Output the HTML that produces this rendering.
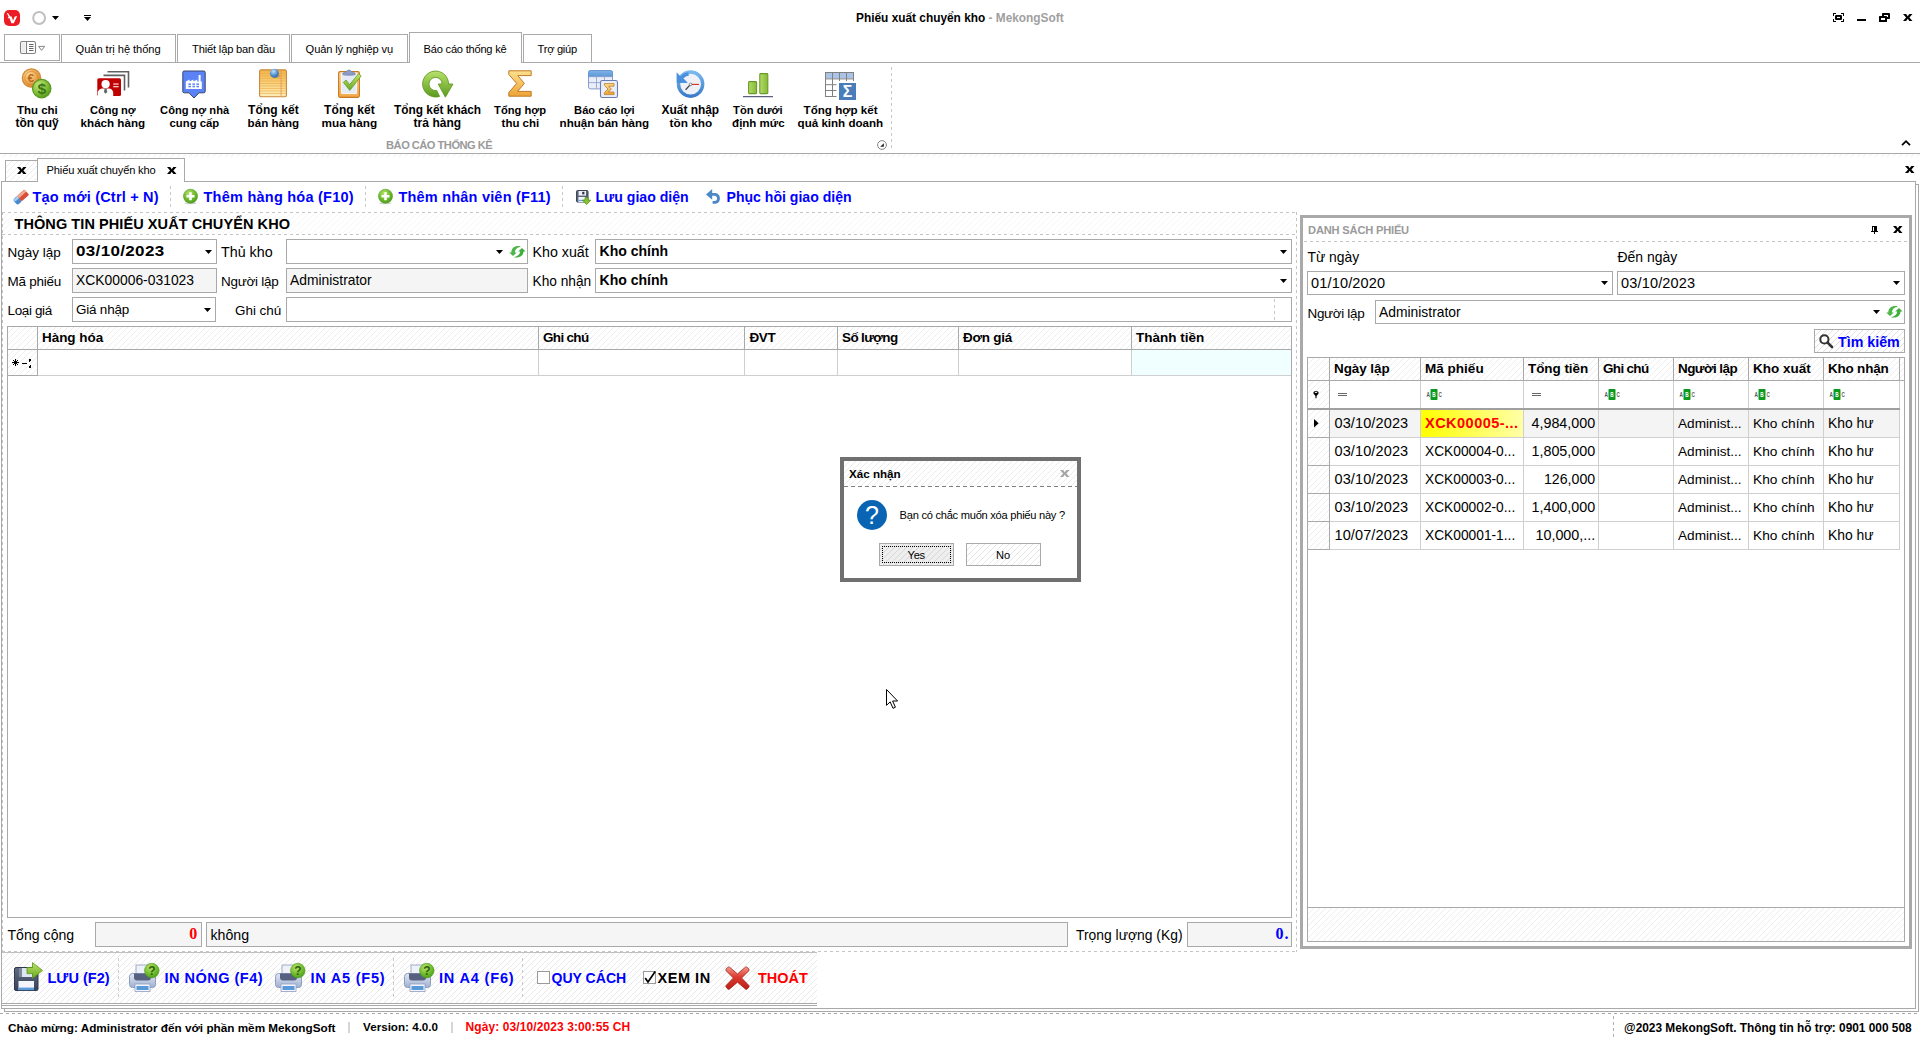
<!DOCTYPE html>
<html lang="vi"><head><meta charset="utf-8"><title>Phiếu xuất chuyển kho - MekongSoft</title>
<style>
html,body{margin:0;padding:0}
body{width:1920px;height:1040px;position:relative;overflow:hidden;background:#fff;font-family:"Liberation Sans", sans-serif}
.a{position:absolute;box-sizing:border-box}
.t{position:absolute;white-space:nowrap;display:block}
svg{position:absolute;overflow:visible}
</style></head>
<body>
<svg style="left:4px;top:10px" width="16" height="16" viewBox="0 0 16 16"><rect width="16" height="16" rx="5" fill="#ec1c24"/><path d="M2.6 2.8L4.4 3.4 6.2 6.6 7.4 6.2 9 10.6 10.8 6.4 13.2 6 9.8 13.2H7.4L5.4 8 3.8 8.4 4.6 6.6Z" fill="#fff"/></svg>
<svg style="left:32px;top:11px" width="15" height="15" viewBox="0 0 15 15"><circle cx="7.1" cy="7" r="5.9" fill="#fff" stroke="#bfbfbf" stroke-width="2"/></svg>
<svg style="left:52px;top:16px" width="7" height="4" viewBox="0 0 7 4"><path d="M0 0H7L3.5 4Z" fill="#000"/></svg>
<svg style="left:84px;top:15px" width="7" height="7" viewBox="0 0 7 7"><rect x="0" y="0" width="7" height="1" fill="#000" shape-rendering="crispEdges"/><path d="M0 2H7L3.5 6Z" fill="#000"/></svg>
<span id="t1" class="t" style="left:856.08px;top:8.00px;font-size:11.86px;line-height:20px;color:#000;font-weight:700;">Phiếu xuất chuyển kho<span style="color:#a0a0a0"> - MekongSoft</span></span>
<svg style="left:1833px;top:13px" width="11" height="9" viewBox="0 0 11 9"><g shape-rendering="crispEdges" fill="#000"><rect x="0" y="0" width="3" height="1"/><rect x="0" y="0" width="1" height="3"/><rect x="8" y="0" width="3" height="1"/><rect x="10" y="0" width="1" height="3"/><rect x="0" y="8" width="3" height="1"/><rect x="0" y="6" width="1" height="3"/><rect x="8" y="8" width="3" height="1"/><rect x="10" y="6" width="1" height="3"/></g><rect x="2" y="2" width="7" height="5" rx="1.2" fill="#000"/><rect x="4" y="3.9" width="3" height="1.2" fill="#fff"/></svg>
<svg style="left:1857px;top:19px" width="9" height="2" viewBox="0 0 9 2"><rect width="9" height="2" fill="#000"/></svg>
<svg style="left:1879px;top:13px" width="11" height="9" viewBox="0 0 11 9"><rect x="3" y="0" width="8" height="6" rx=".8" fill="#000"/><rect x="5" y="2" width="4" height="2" fill="#fff"/><rect x="0" y="3" width="8" height="6" rx=".5" fill="#000"/><rect x="2" y="5" width="4" height="2" fill="#fff"/></svg>
<svg style="left:1903px;top:14px" width="9.5" height="7" viewBox="0 0 9.5 7"><path d="M0 0H3.18L4.75 2.17 6.32 0H9.5L6.41 3.5 9.5 7H6.32L4.75 4.83 3.18 7H0L3.09 3.5Z" fill="#000"/></svg>
<div class="a" style="left:0px;top:62px;width:1920px;height:1px;background:#a9a9a9"></div>
<div class="a" style="left:4px;top:34px;width:56px;height:27px;border:1px solid #a9a9a9;background:linear-gradient(#fff,#fff);"></div>
<div class="a" style="left:61px;top:34px;width:115px;height:29px;border:1px solid #a9a9a9;background:linear-gradient(#fff,#fff);"></div>
<div class="a" style="left:177px;top:34px;width:113px;height:29px;border:1px solid #a9a9a9;background:linear-gradient(#fff,#fff);"></div>
<div class="a" style="left:291px;top:34px;width:117px;height:29px;border:1px solid #a9a9a9;background:linear-gradient(#fff,#fff);"></div>
<div class="a" style="left:409px;top:32px;width:113px;height:31px;border:1px solid #a9a9a9;background:linear-gradient(#fff,#fff);border-bottom:none;"></div>
<div class="a" style="left:523px;top:34px;width:69px;height:29px;border:1px solid #a9a9a9;background:linear-gradient(#fff,#fff);"></div>
<svg style="left:20px;top:41px" width="26" height="14" viewBox="0 0 26 14"><rect x="0.5" y="0.5" width="15" height="12" rx="1.8" fill="#fff" stroke="#808080" stroke-width="1.1"/><rect x="1.6" y="1.6" width="3.6" height="9.8" fill="#ececec"/><path d="M6.5 .5V12.5" stroke="#808080" stroke-width="1.1"/><path d="M9 3.5H13.5M9 5.5H13.5M9 7.5H13.5M9 9.5H13.5" stroke="#555" stroke-width=".9"/><path d="M18.6 5.4H24.6L21.6 9.4Z" fill="#fff" stroke="#777" stroke-width=".9"/></svg>
<span id="t2" class="t" style="left:75.61px;top:39.00px;font-size:11.11px;line-height:20px;color:#000;letter-spacing:-0.051px;">Quản trị hệ thống</span>
<span id="t3" class="t" style="left:192.11px;top:39.00px;font-size:11.11px;line-height:20px;color:#000;letter-spacing:-0.176px;">Thiết lập ban đầu</span>
<span id="t4" class="t" style="left:305.61px;top:39.00px;font-size:11.11px;line-height:20px;color:#000;letter-spacing:-0.125px;">Quản lý nghiệp vụ</span>
<span id="t5" class="t" style="left:423.61px;top:39.00px;font-size:11.11px;line-height:20px;color:#000;letter-spacing:-0.228px;">Báo cáo thống kê</span>
<span id="t6" class="t" style="left:537.61px;top:39.00px;font-size:11.11px;line-height:20px;color:#000;letter-spacing:-0.272px;">Trợ giúp</span>
<svg style="left:21px;top:68px" width="32" height="32" viewBox="0 0 32 32"><defs><radialGradient id="g1" cx="0.35" cy="0.3" r="0.8"><stop offset="0" stop-color="#fbd893"/><stop offset="0.6" stop-color="#eaa248"/><stop offset="1" stop-color="#cf7f2e"/></radialGradient><radialGradient id="g2" cx="0.35" cy="0.3" r="0.8"><stop offset="0" stop-color="#c2e67a"/><stop offset="0.6" stop-color="#7fbc32"/><stop offset="1" stop-color="#4f8f1a"/></radialGradient></defs><circle cx="10.5" cy="10" r="9.2" fill="url(#g1)" stroke="#d28a3c" stroke-width="1.2"/><circle cx="10.5" cy="10" r="6.6" fill="none" stroke="#c8782a" stroke-width="1" opacity=".55"/><text x="9.6" y="14" text-anchor="middle" font-family="Liberation Sans,sans-serif" font-size="11.5" font-weight="700" fill="#b8681e">€</text><circle cx="20.7" cy="20.6" r="9.2" fill="url(#g2)" stroke="#5a9822" stroke-width="1.2"/><text x="20.7" y="26.2" text-anchor="middle" font-family="Liberation Sans,sans-serif" font-size="15.5" font-weight="700" fill="#38761a">$</text></svg>
<svg style="left:97px;top:67.2px" width="33" height="30" viewBox="0 0 33 30"><path d="M10.5 4.8H31.5V20.5" fill="none" stroke="#606060" stroke-width="1.6"/><path d="M6.5 8.4H27.5V23.6" fill="none" stroke="#606060" stroke-width="1.6"/><rect x="0.3" y="11.2" width="23.7" height="17.8" rx="1.6" fill="#c00000"/><circle cx="8.6" cy="17.2" r="4.1" fill="#fff"/><path d="M0.8 29V26C0.8 23 3.6 21.6 5.8 21.6H11.4C13.6 21.6 16.2 23 16.2 26V29Z" fill="#fff"/><path d="M7.6 21.6H9.6L10.3 25 8.6 26.8 6.9 25Z" fill="#666"/><rect x="16.2" y="16.4" width="5.4" height="1.3" fill="#f4c8c8"/><rect x="16.2" y="19" width="5.4" height="1.3" fill="#f4c8c8"/></svg>
<svg style="left:182px;top:70px" width="24" height="29" viewBox="0 0 24 29"><path d="M2.2 1H21.8A1.4 1.4 0 0 1 23.2 2.4V21.4A1.4 1.4 0 0 1 21.8 22.8H17L12 28 7 22.8H2.2A1.4 1.4 0 0 1 .8 21.4V2.4A1.4 1.4 0 0 1 2.2 1Z" fill="#5a83f8" stroke="#3a4468" stroke-width="1"/><path d="M3.8 19V11.6L7.6 9.4V11.6L11.4 9.4V11.6L15.2 9.4V11.6H16.6V5H18.6V11.6H19.8V19Z" fill="#fff"/><g fill="#5a83f8"><rect x="6.4" y="13.4" width="2.6" height="1.5"/><rect x="10.4" y="13.4" width="2.6" height="1.5"/><rect x="14.4" y="13.4" width="2.6" height="1.5"/><rect x="6.4" y="15.8" width="2.6" height="1.5"/><rect x="10.4" y="15.8" width="2.6" height="1.5"/><rect x="14.4" y="15.8" width="2.6" height="1.5"/></g></svg>
<svg style="left:259px;top:69px" width="28" height="29" viewBox="0 0 28 29"><defs><linearGradient id="g3" x1="0" y1="0" x2="0" y2="1"><stop offset="0" stop-color="#f4b445"/><stop offset="1" stop-color="#fdeeb8"/></linearGradient><radialGradient id="g4" cx="0.4" cy="0.3" r="0.8"><stop offset="0" stop-color="#bfe0f8"/><stop offset="0.6" stop-color="#4a8acb"/><stop offset="1" stop-color="#2c5f9e"/></radialGradient></defs><rect x="0.6" y="0.9" width="26.8" height="26.8" rx="1.5" fill="url(#g3)" stroke="#c8883c" stroke-width="1.1"/><rect x="1.5" y="4.0" width="25" height="1" fill="#e8a840" opacity=".55"/><rect x="1.5" y="6.5" width="25" height="1" fill="#e8a840" opacity=".55"/><rect x="1.5" y="9.0" width="25" height="1" fill="#e8a840" opacity=".55"/><rect x="1.5" y="11.5" width="25" height="1" fill="#e8a840" opacity=".55"/><rect x="1.5" y="14.0" width="25" height="1" fill="#e8a840" opacity=".55"/><rect x="1.5" y="16.5" width="25" height="1" fill="#e8a840" opacity=".55"/><rect x="1.5" y="19.0" width="25" height="1" fill="#e8a840" opacity=".55"/><rect x="1.5" y="21.5" width="25" height="1" fill="#e8a840" opacity=".55"/><rect x="1.5" y="24.0" width="25" height="1" fill="#e8a840" opacity=".55"/><rect x="21.6" y="1.5" width="1" height="25.5" fill="#e08a50" opacity=".7"/><ellipse cx="17.5" cy="7" rx="3.6" ry="2" fill="#7a5a20" opacity=".25"/><circle cx="15.4" cy="4.2" r="4.5" fill="url(#g4)"/></svg>
<svg style="left:338px;top:69px" width="24" height="29" viewBox="0 0 24 29"><defs><linearGradient id="g5" x1="0" y1="0" x2="0" y2="1"><stop offset="0" stop-color="#fbd79a"/><stop offset="1" stop-color="#f0a848"/></linearGradient><linearGradient id="g6" x1="0" y1="0" x2="0" y2="1"><stop offset="0" stop-color="#c4e86c"/><stop offset="1" stop-color="#6aa820"/></linearGradient></defs><rect x="0.6" y="2.6" width="20.8" height="25.8" rx="1.6" fill="url(#g5)" stroke="#c8781e" stroke-width="1.1"/><rect x="3.6" y="4" width="14.8" height="20.4" fill="#e4eaf6" stroke="#fff" stroke-width=".8"/><path d="M4.6 5.2C4.6 3 8 3.6 9 2 9.8.6 12.2.6 13 2 14 3.6 17.4 3 17.4 5.2 17.4 6.6 4.6 6.6 4.6 5.2Z" fill="#8c9cc6" stroke="#6478a8" stroke-width=".6"/><path d="M5.4 13.4L8 11 11.6 15.6 20.8 4.6 23.2 7 11.8 21.4Z" fill="url(#g6)" stroke="#5a9018" stroke-width=".7"/></svg>
<svg style="left:421.6px;top:70px" width="32" height="28" viewBox="0 0 32 28"><defs><linearGradient id="g7" x1="0" y1="0" x2="0" y2="1"><stop offset="0" stop-color="#b8e26c"/><stop offset="1" stop-color="#5c9a1e"/></linearGradient></defs><path d="M20.2 14A6.6 6.6 0 1 0 14.75 20.5L17.6 26.4A13 13 0 1 1 26.6 14H31L23.4 27.2 16.2 14Z" fill="url(#g7)" stroke="#5a9418" stroke-width=".8" stroke-linejoin="round"/></svg>
<svg style="left:508px;top:70px" width="24" height="27" viewBox="0 0 24 27"><defs><linearGradient id="g8" x1="0" y1="0" x2="0" y2="1"><stop offset="0" stop-color="#fde08e"/><stop offset="1" stop-color="#eda436"/></linearGradient></defs><g transform="scale(1.0)"><path d="M0.8 0.8H23.2V5.6H9.8L16.4 13.4 9.6 21.4H23.2V26.2H0.8V22.6L8.6 13.4 0.8 4.4Z" fill="url(#g8)" stroke="#c07a28" stroke-width="1" stroke-linejoin="round"/></g></svg>
<svg style="left:588px;top:70px" width="31" height="29" viewBox="0 0 31 29"><defs><linearGradient id="g9" x1="0" y1="0" x2="0" y2="1"><stop offset="0" stop-color="#7db4e8"/><stop offset="1" stop-color="#5a98d8"/></linearGradient><linearGradient id="g10" x1="0" y1="0" x2="0" y2="1"><stop offset="0" stop-color="#fde08e"/><stop offset="1" stop-color="#eda436"/></linearGradient></defs><rect x="0.5" y="0.5" width="24" height="18.4" rx="2" fill="#e9eef9" stroke="#8a9ccc"/><path d="M.5 6.6V2.5A2 2 0 0 1 2.5.5H22.5A2 2 0 0 1 24.5 2.5V6.6Z" fill="url(#g9)" stroke="#5a8ccc" stroke-width=".6"/><path d="M8.5 .5V18.8M16.5 .5V18.8M.5 6.6H24.5M.5 12.6H24.5" stroke="#8a9ccc" stroke-width="1" fill="none" opacity=".8"/><rect x="12.5" y="10.5" width="17" height="17" rx="1.8" fill="#e9eefb" stroke="#6a7cb4" stroke-width="1.1"/><path d="M16.4 13.6H26V16.2H20.6L23.4 19 20.4 22H26V24.6H16.4V22.6L20 19 16.4 15.4Z" fill="url(#g10)" stroke="#c07a28" stroke-width=".8" stroke-linejoin="round"/></svg>
<svg style="left:676px;top:70px" width="29" height="29" viewBox="0 0 29 29"><defs><linearGradient id="g11" x1="0" y1="0" x2="0" y2="1"><stop offset="0" stop-color="#7ab8f0"/><stop offset="1" stop-color="#3a7cc8"/></linearGradient></defs><circle cx="14.6" cy="14.1" r="12.1" fill="#eef2f8" stroke="url(#g11)" stroke-width="3.4"/><path d="M.6 2.2L4.6 6.4C6.6 4 9 2.6 12 2.2L13 5.4C10.6 5.8 9 6.8 7.4 8.6L11.6 12.8H.6Z" fill="#4a90dc"/><path d="M.6 12.8H11.6L7.6 9Z" fill="#4a90dc"/><path d="M14.6 14.4H23" stroke="#d82a20" stroke-width="1.1"/><path d="M14.6 14.4L9.6 19.8" stroke="#444" stroke-width="1.3"/><circle cx="14.6" cy="14.4" r="1.3" fill="#fff" stroke="#555" stroke-width=".7"/></svg>
<svg style="left:743px;top:73px" width="30" height="25" viewBox="0 0 30 25"><defs><linearGradient id="g12" x1="0" y1="0" x2="1" y2="0"><stop offset="0" stop-color="#b4dc66"/><stop offset="1" stop-color="#86b83a"/></linearGradient></defs><rect x="5.6" y="8.6" width="8" height="12" rx=".8" fill="url(#g12)" stroke="#6a9a28" stroke-width="1.1"/><rect x="16.8" y="0.6" width="8" height="20" rx=".8" fill="url(#g12)" stroke="#6a9a28" stroke-width="1.1"/><rect x="0" y="23.2" width="30" height="1" fill="#333b60"/></svg>
<svg style="left:825px;top:72px" width="32" height="29" viewBox="0 0 32 29"><rect x="0.5" y="0.5" width="28" height="24" fill="#fff" stroke="#808080"/><rect x="1" y="1" width="27" height="5.4" fill="#a9c4e8"/><path d="M.5 6.9H28.5M.5 12.7H28.5M.5 18.5H28.5M7.5 .5V24.5M14.5 .5V24.5M21.5 .5V24.5" stroke="#808080" stroke-width="1" fill="none"/><rect x="11.5" y="9" width="20" height="19" fill="#fff"/><rect x="14" y="11" width="17" height="17" fill="#4a7ebb"/><text x="22.5" y="25.4" text-anchor="middle" font-family="Liberation Sans,sans-serif" font-size="16" font-weight="700" fill="#fff">Σ</text></svg>
<span id="t7" class="t" style="left:17.10px;top:100.00px;font-size:11.41px;line-height:20px;color:#000;font-weight:700;">Thu chi</span>
<span id="t8" class="t" style="left:15.58px;top:113.00px;font-size:11.94px;line-height:20px;color:#000;font-weight:700;">tồn quỹ</span>
<span id="t9" class="t" style="left:90.11px;top:100.00px;font-size:11.11px;line-height:20px;color:#000;font-weight:700;letter-spacing:-0.101px;">Công nợ</span>
<span id="t10" class="t" style="left:80.59px;top:113.00px;font-size:11.62px;line-height:20px;color:#000;font-weight:700;">khách hàng</span>
<span id="t11" class="t" style="left:160.11px;top:100.00px;font-size:11.12px;line-height:20px;color:#000;font-weight:700;">Công nợ nhà</span>
<span id="t12" class="t" style="left:169.60px;top:113.00px;font-size:11.29px;line-height:20px;color:#000;font-weight:700;">cung cấp</span>
<span id="t13" class="t" style="left:248.08px;top:100.00px;font-size:11.99px;line-height:20px;color:#000;font-weight:700;letter-spacing:0.090px;">Tổng kết</span>
<span id="t14" class="t" style="left:247.59px;top:113.00px;font-size:11.61px;line-height:20px;color:#000;font-weight:700;">bán hàng</span>
<span id="t15" class="t" style="left:324.08px;top:100.00px;font-size:11.99px;line-height:20px;color:#000;font-weight:700;letter-spacing:0.090px;">Tổng kết</span>
<span id="t16" class="t" style="left:321.59px;top:113.00px;font-size:11.77px;line-height:20px;color:#000;font-weight:700;">mua hàng</span>
<span id="t17" class="t" style="left:394.08px;top:100.00px;font-size:11.87px;line-height:20px;color:#000;font-weight:700;">Tổng kết khách</span>
<span id="t18" class="t" style="left:413.58px;top:113.00px;font-size:11.99px;line-height:20px;color:#000;font-weight:700;letter-spacing:0.041px;">trả hàng</span>
<span id="t19" class="t" style="left:494.11px;top:100.00px;font-size:11.18px;line-height:20px;color:#000;font-weight:700;">Tổng hợp</span>
<span id="t20" class="t" style="left:501.60px;top:113.00px;font-size:11.46px;line-height:20px;color:#000;font-weight:700;">thu chi</span>
<span id="t21" class="t" style="left:574.11px;top:100.00px;font-size:11.14px;line-height:20px;color:#000;font-weight:700;">Báo cáo lợi</span>
<span id="t22" class="t" style="left:559.59px;top:113.00px;font-size:11.60px;line-height:20px;color:#000;font-weight:700;">nhuận bán hàng</span>
<span id="t23" class="t" style="left:661.58px;top:100.00px;font-size:11.92px;line-height:20px;color:#000;font-weight:700;">Xuất nhập</span>
<span id="t24" class="t" style="left:669.59px;top:113.00px;font-size:11.80px;line-height:20px;color:#000;font-weight:700;">tồn kho</span>
<span id="t25" class="t" style="left:733.11px;top:100.00px;font-size:11.18px;line-height:20px;color:#000;font-weight:700;">Tồn dưới</span>
<span id="t26" class="t" style="left:732.10px;top:113.00px;font-size:11.53px;line-height:20px;color:#000;font-weight:700;">định mức</span>
<span id="t27" class="t" style="left:803.59px;top:100.00px;font-size:11.62px;line-height:20px;color:#000;font-weight:700;">Tổng hợp kết</span>
<span id="t28" class="t" style="left:797.59px;top:113.00px;font-size:11.58px;line-height:20px;color:#000;font-weight:700;">quả kinh doanh</span>
<span id="t29" class="t" style="left:386.11px;top:135.00px;font-size:11.11px;line-height:20px;color:#9a9a9a;font-weight:700;letter-spacing:-0.509px;">BÁO CÁO THỐNG KÊ</span>
<svg style="left:877px;top:140px" width="10" height="10" viewBox="0 0 10 10"><circle cx="5" cy="5" r="4.4" fill="#fff" stroke="#777" stroke-width=".9"/><path d="M6.8 3.2V6.8H3.2Z" fill="#222"/></svg>
<div class="a" style="left:891px;top:67px;width:1px;height:84px;background:repeating-linear-gradient(180deg,#c8c8c8 0,#c8c8c8 3px,rgba(0,0,0,0) 3px,rgba(0,0,0,0) 6px)"></div>
<svg style="left:1901px;top:140px" width="10" height="6" viewBox="0 0 10 6"><path d="M1 5.2L5 1.2 9 5.2" fill="none" stroke="#000" stroke-width="1.8"/></svg>
<div class="a" style="left:0px;top:153px;width:1920px;height:1px;background:#a9a9a9"></div>
<div class="a" style="left:0px;top:154px;width:1920px;height:3px;background:repeating-linear-gradient(135deg,rgba(0,0,0,0) 0,rgba(0,0,0,0) 3.54px,#eeeeee 3.54px,#eeeeee 4.243px);"></div>
<div class="a" style="left:5px;top:160px;width:33px;height:22px;border:1px solid #a9a9a9;background:repeating-linear-gradient(135deg,rgba(0,0,0,0) 0,rgba(0,0,0,0) 3.54px,#ececec 3.54px,#ececec 4.243px),linear-gradient(#fff,#fff);"></div>
<div class="a" style="left:37px;top:158px;width:148px;height:24px;border:1px solid #a9a9a9;background:linear-gradient(#fff,#fff);border-bottom:none;"></div>
<svg style="left:16.5px;top:167px" width="9.5" height="7" viewBox="0 0 9.5 7"><path d="M0 0H3.18L4.75 2.17 6.32 0H9.5L6.41 3.5 9.5 7H6.32L4.75 4.83 3.18 7H0L3.09 3.5Z" fill="#000"/></svg>
<svg style="left:167.3px;top:167px" width="9.5" height="7" viewBox="0 0 9.5 7"><path d="M0 0H3.18L4.75 2.17 6.32 0H9.5L6.41 3.5 9.5 7H6.32L4.75 4.83 3.18 7H0L3.09 3.5Z" fill="#000"/></svg>
<svg style="left:1905px;top:166px" width="9.5" height="7" viewBox="0 0 9.5 7"><path d="M0 0H3.18L4.75 2.17 6.32 0H9.5L6.41 3.5 9.5 7H6.32L4.75 4.83 3.18 7H0L3.09 3.5Z" fill="#000"/></svg>
<span id="t30" class="t" style="left:46.61px;top:160.00px;font-size:11.11px;line-height:20px;color:#000;letter-spacing:-0.169px;">Phiếu xuất chuyển kho</span>
<div class="a" style="left:1px;top:181px;width:36px;height:1px;background:#a9a9a9"></div>
<div class="a" style="left:185px;top:181px;width:1731px;height:1px;background:#a9a9a9"></div>
<div class="a" style="left:1px;top:181px;width:1px;height:828px;background:#a9a9a9"></div>
<div class="a" style="left:1915px;top:181px;width:1px;height:828px;background:#a9a9a9"></div>
<div class="a" style="left:1918px;top:184px;width:1px;height:828px;background:#a9a9a9"></div>
<div class="a" style="left:1916px;top:184px;width:3px;height:1px;background:#a9a9a9"></div>
<div class="a" style="left:1px;top:1008px;width:1915px;height:1px;background:#a9a9a9"></div>
<div class="a" style="left:4px;top:1011px;width:1915px;height:1px;background:#a9a9a9"></div>
<div class="a" style="left:4px;top:1008px;width:1px;height:4px;background:#a9a9a9"></div>
<svg style="left:13px;top:190px" width="16" height="14" viewBox="0 0 16 14"><g transform="translate(0.6 0.6) scale(0.93) rotate(-42 8 7)"><rect x="-0.6" y="3.2" width="7" height="7.8" rx="2.2" fill="#4a8acc"/><rect x="0" y="3.6" width="6.4" height="2.8" rx="1.2" fill="#a4ccf0"/><rect x="5.6" y="3.2" width="10.6" height="7.8" rx="1.2" fill="#d64f3a"/><rect x="5.6" y="3.6" width="10.6" height="2.8" fill="#f4ab96"/></g></svg>
<span id="t31" class="t" style="left:32.49px;top:187.00px;font-size:14.53px;line-height:20px;color:#0000ff;font-weight:700;letter-spacing:0.194px;">Tạo mới (Ctrl + N)</span>
<div class="a" style="left:170px;top:186px;width:1px;height:23px;background:repeating-linear-gradient(180deg,#c8c8c8 0,#c8c8c8 3px,rgba(0,0,0,0) 3px,rgba(0,0,0,0) 6px)"></div>
<svg style="left:183px;top:189px" width="15" height="16" viewBox="0 0 15 16"><defs><radialGradient id="g13" cx="0.4" cy="0.3" r="0.75"><stop offset="0" stop-color="#b6e36a"/><stop offset="0.6" stop-color="#6cb82a"/><stop offset="1" stop-color="#4c9a1c"/></radialGradient></defs><ellipse cx="7.5" cy="14.3" rx="6" ry="1" fill="#000" opacity=".18"/><circle cx="7.5" cy="7.2" r="7" fill="url(#g13)" stroke="#4f9a20" stroke-width=".6"/><path d="M7.5 3.2V11.2M3.5 7.2H11.5" stroke="#fff" stroke-width="2.6" fill="none"/></svg>
<span id="t32" class="t" style="left:203.49px;top:187.00px;font-size:14.53px;line-height:20px;color:#0000ff;font-weight:700;letter-spacing:0.230px;">Thêm hàng hóa (F10)</span>
<div class="a" style="left:365px;top:186px;width:1px;height:23px;background:repeating-linear-gradient(180deg,#c8c8c8 0,#c8c8c8 3px,rgba(0,0,0,0) 3px,rgba(0,0,0,0) 6px)"></div>
<svg style="left:378px;top:189px" width="15" height="16" viewBox="0 0 15 16"><defs><radialGradient id="g14" cx="0.4" cy="0.3" r="0.75"><stop offset="0" stop-color="#b6e36a"/><stop offset="0.6" stop-color="#6cb82a"/><stop offset="1" stop-color="#4c9a1c"/></radialGradient></defs><ellipse cx="7.5" cy="14.3" rx="6" ry="1" fill="#000" opacity=".18"/><circle cx="7.5" cy="7.2" r="7" fill="url(#g14)" stroke="#4f9a20" stroke-width=".6"/><path d="M7.5 3.2V11.2M3.5 7.2H11.5" stroke="#fff" stroke-width="2.6" fill="none"/></svg>
<span id="t33" class="t" style="left:398.49px;top:187.00px;font-size:14.53px;line-height:20px;color:#0000ff;font-weight:700;letter-spacing:0.194px;">Thêm nhân viên (F11)</span>
<div class="a" style="left:562px;top:186px;width:1px;height:23px;background:repeating-linear-gradient(180deg,#c8c8c8 0,#c8c8c8 3px,rgba(0,0,0,0) 3px,rgba(0,0,0,0) 6px)"></div>
<svg style="left:576px;top:190px" width="16" height="15" viewBox="0 0 16 15"><rect x="0.5" y="0.5" width="11.5" height="11.5" rx="1" fill="#5a6478" stroke="#3e4658"/><rect x="2.6" y="1" width="7.4" height="4.6" fill="#eef1f6"/><rect x="6.2" y="1.8" width="2.2" height="2.6" fill="#2e3546"/><rect x="2.4" y="7" width="7.8" height="5" fill="#f4f6fa"/><rect x="2.4" y="9.8" width="7.8" height="1.3" fill="#6aa6e0"/><path d="M9 7.6H12.2V10.2H14.9L10.6 14.6 6.4 10.2H9Z" fill="#86c232" stroke="#4e8a14" stroke-width=".7"/></svg>
<span id="t34" class="t" style="left:595.51px;top:187.00px;font-size:14.10px;line-height:20px;color:#0000ff;font-weight:700;">Lưu giao diện</span>
<svg style="left:706px;top:189px" width="16" height="15" viewBox="0 0 16 15"><path d="M4 5.4H9.4A4.5 4.2 0 0 1 9.4 13.4H6.6" fill="none" stroke="#4c88c8" stroke-width="2.8"/><path d="M0 5.4L6.2 0V10.8Z" fill="#4c88c8"/></svg>
<span id="t35" class="t" style="left:726.51px;top:187.00px;font-size:14.09px;line-height:20px;color:#0000ff;font-weight:700;">Phục hồi giao diện</span>
<div class="a" style="left:3px;top:213px;width:1293px;height:21px;background:repeating-linear-gradient(135deg,rgba(0,0,0,0) 0,rgba(0,0,0,0) 3.54px,#f6f6f6 3.54px,#f6f6f6 4.243px);"></div>
<div class="a" style="left:2px;top:212px;width:1295px;height:1px;background:repeating-linear-gradient(90deg,#c4c4c4 0,#c4c4c4 3px,rgba(0,0,0,0) 3px,rgba(0,0,0,0) 6px);background-position:0px 0"></div>
<div class="a" style="left:2px;top:234px;width:1295px;height:1px;background:repeating-linear-gradient(90deg,#c4c4c4 0,#c4c4c4 3px,rgba(0,0,0,0) 3px,rgba(0,0,0,0) 6px);background-position:0px 0"></div>
<div class="a" style="left:2px;top:212px;width:1px;height:740px;background:repeating-linear-gradient(180deg,#c4c4c4 0,#c4c4c4 3px,rgba(0,0,0,0) 3px,rgba(0,0,0,0) 6px)"></div>
<div class="a" style="left:1296px;top:212px;width:1px;height:740px;background:repeating-linear-gradient(180deg,#c4c4c4 0,#c4c4c4 3px,rgba(0,0,0,0) 3px,rgba(0,0,0,0) 6px)"></div>
<div class="a" style="left:2px;top:951px;width:1295px;height:1px;background:repeating-linear-gradient(90deg,#c4c4c4 0,#c4c4c4 3px,rgba(0,0,0,0) 3px,rgba(0,0,0,0) 6px);background-position:0px 0"></div>
<span id="t36" class="t" style="left:14.49px;top:214.00px;font-size:14.53px;line-height:20px;color:#000;font-weight:700;letter-spacing:0.070px;">THÔNG TIN PHIẾU XUẤT CHUYỂN KHO</span>
<div class="a" style="left:72px;top:239px;width:145px;height:25px;border:1px solid #a9a9a9;background:linear-gradient(#fff,#fff);"></div>
<div class="a" style="left:286px;top:239px;width:242px;height:25px;border:1px solid #a9a9a9;background:linear-gradient(#fff,#fff);"></div>
<div class="a" style="left:595px;top:239px;width:697px;height:25px;border:1px solid #a9a9a9;background:linear-gradient(#fff,#fff);"></div>
<div class="a" style="left:72px;top:268px;width:145px;height:25px;border:1px solid #a9a9a9;background:linear-gradient(#f5f5f5,#f5f5f5);"></div>
<div class="a" style="left:286px;top:268px;width:242px;height:25px;border:1px solid #a9a9a9;background:linear-gradient(#f5f5f5,#f5f5f5);"></div>
<div class="a" style="left:595px;top:268px;width:697px;height:25px;border:1px solid #a9a9a9;background:linear-gradient(#fff,#fff);"></div>
<div class="a" style="left:72px;top:297px;width:144px;height:25px;border:1px solid #a9a9a9;background:linear-gradient(#fff,#fff);"></div>
<div class="a" style="left:286px;top:297px;width:1006px;height:25px;border:1px solid #a9a9a9;background:linear-gradient(#fff,#fff);"></div>
<div class="a" style="left:1274px;top:299px;width:1px;height:21px;background:repeating-linear-gradient(180deg,#c8c8c8 0,#c8c8c8 3px,rgba(0,0,0,0) 3px,rgba(0,0,0,0) 6px)"></div>
<span id="t37" class="t" style="left:7.53px;top:243.00px;font-size:13.47px;line-height:20px;color:#000;">Ngày lập</span>
<span id="t38" class="t" style="left:7.53px;top:272.00px;font-size:13.46px;line-height:20px;color:#000;letter-spacing:-0.246px;">Mã phiếu</span>
<span id="t39" class="t" style="left:7.53px;top:301.00px;font-size:13.46px;line-height:20px;color:#000;letter-spacing:-0.357px;">Loại giá</span>
<span id="t40" class="t" style="left:221.00px;top:242.00px;font-size:14.31px;line-height:20px;color:#000;">Thủ kho</span>
<span id="t41" class="t" style="left:221.03px;top:272.00px;font-size:13.46px;line-height:20px;color:#000;letter-spacing:-0.259px;">Người lập</span>
<span id="t42" class="t" style="left:235.03px;top:301.00px;font-size:13.46px;line-height:20px;color:#000;letter-spacing:-0.037px;">Ghi chú</span>
<span id="t43" class="t" style="left:532.50px;top:242.00px;font-size:14.24px;line-height:20px;color:#000;">Kho xuất</span>
<span id="t44" class="t" style="left:532.52px;top:272.00px;font-size:13.71px;line-height:20px;color:#000;">Kho nhận</span>
<span id="t45" class="t" style="left:75.99px;top:241.00px;font-size:14.53px;line-height:20px;color:#000;font-weight:700;letter-spacing:0.298px;transform:scaleX(1.17);transform-origin:0 0;">03/10/2023</span>
<span id="t46" class="t" style="left:76.01px;top:270.00px;font-size:13.89px;line-height:20px;color:#000;">XCK00006-031023</span>
<span id="t47" class="t" style="left:76.03px;top:300.00px;font-size:13.46px;line-height:20px;color:#000;letter-spacing:-0.209px;">Giá nhập</span>
<span id="t48" class="t" style="left:290.01px;top:270.00px;font-size:13.87px;line-height:20px;color:#000;">Administrator</span>
<span id="t49" class="t" style="left:599.51px;top:241.00px;font-size:14.06px;line-height:20px;color:#000;font-weight:700;">Kho chính</span>
<span id="t50" class="t" style="left:599.51px;top:270.00px;font-size:14.06px;line-height:20px;color:#000;font-weight:700;">Kho chính</span>
<svg style="left:205px;top:250px" width="7" height="4" viewBox="0 0 7 4"><path d="M0 0H7L3.5 4Z" fill="#000"/></svg>
<svg style="left:204px;top:308px" width="7" height="4" viewBox="0 0 7 4"><path d="M0 0H7L3.5 4Z" fill="#000"/></svg>
<svg style="left:496px;top:250px" width="7" height="4" viewBox="0 0 7 4"><path d="M0 0H7L3.5 4Z" fill="#000"/></svg>
<svg style="left:1280px;top:250px" width="7" height="4" viewBox="0 0 7 4"><path d="M0 0H7L3.5 4Z" fill="#000"/></svg>
<svg style="left:1280px;top:279px" width="7" height="4" viewBox="0 0 7 4"><path d="M0 0H7L3.5 4Z" fill="#000"/></svg>
<svg style="left:508.5px;top:244.5px" width="17" height="14" viewBox="0 0 17 14"><path d="M11.4 1.1C6 0.1 2.2 3 2.3 7.4L0.2 7.4 4 10.9 7.8 7.5 5.8 7.5C5.9 4.6 8 2.5 11.4 1.7Z" fill="#4cb648"/><path d="M5.4 12.4C10.6 13.4 14.4 10.6 14.5 6.4L16.6 6.4 13 3.1 9.2 6.5 11.2 6.5C11 9.2 9 11.2 5.4 11.9Z" fill="#3fae3c"/></svg>
<div class="a" style="left:7px;top:326px;width:1285px;height:592px;border:1px solid #a9a9a9;background:linear-gradient(#fff,#fff);"></div>
<div class="a" style="left:8px;top:327px;width:1283px;height:22px;background:repeating-linear-gradient(135deg,rgba(0,0,0,0) 0,rgba(0,0,0,0) 3.54px,#eeeeee 3.54px,#eeeeee 4.243px);"></div>
<div class="a" style="left:8px;top:349px;width:1283px;height:1px;background:#a9a9a9"></div>
<div class="a" style="left:8px;top:350px;width:29px;height:26px;background:repeating-linear-gradient(135deg,rgba(0,0,0,0) 0,rgba(0,0,0,0) 3.54px,#eeeeee 3.54px,#eeeeee 4.243px);"></div>
<div class="a" style="left:1132px;top:350px;width:159px;height:25px;background:linear-gradient(#f0ffff,#f0ffff);"></div>
<div class="a" style="left:37px;top:327px;width:1px;height:23px;background:#a9a9a9"></div>
<div class="a" style="left:37px;top:350px;width:1px;height:26px;background:#a9a9a9"></div>
<div class="a" style="left:538px;top:327px;width:1px;height:23px;background:#a9a9a9"></div>
<div class="a" style="left:538px;top:350px;width:1px;height:26px;background:#cfcfcf"></div>
<div class="a" style="left:744px;top:327px;width:1px;height:23px;background:#a9a9a9"></div>
<div class="a" style="left:744px;top:350px;width:1px;height:26px;background:#cfcfcf"></div>
<div class="a" style="left:837px;top:327px;width:1px;height:23px;background:#a9a9a9"></div>
<div class="a" style="left:837px;top:350px;width:1px;height:26px;background:#cfcfcf"></div>
<div class="a" style="left:958px;top:327px;width:1px;height:23px;background:#a9a9a9"></div>
<div class="a" style="left:958px;top:350px;width:1px;height:26px;background:#cfcfcf"></div>
<div class="a" style="left:1131px;top:327px;width:1px;height:23px;background:#a9a9a9"></div>
<div class="a" style="left:1131px;top:350px;width:1px;height:26px;background:#cfcfcf"></div>
<div class="a" style="left:8px;top:375px;width:1283px;height:1px;background:#cfcfcf"></div>
<div class="a" style="left:8px;top:375px;width:30px;height:1px;background:#a9a9a9"></div>
<span id="t51" class="t" style="left:42.03px;top:328.00px;font-size:13.46px;line-height:20px;color:#000;font-weight:700;letter-spacing:-0.022px;">Hàng hóa</span>
<span id="t52" class="t" style="left:543.03px;top:328.00px;font-size:13.46px;line-height:20px;color:#000;font-weight:700;letter-spacing:-0.658px;">Ghi chú</span>
<span id="t53" class="t" style="left:749.53px;top:328.00px;font-size:13.46px;line-height:20px;color:#000;font-weight:700;letter-spacing:-0.383px;">ĐVT</span>
<span id="t54" class="t" style="left:842.03px;top:328.00px;font-size:13.46px;line-height:20px;color:#000;font-weight:700;letter-spacing:-0.612px;">Số lượng</span>
<span id="t55" class="t" style="left:963.03px;top:328.00px;font-size:13.46px;line-height:20px;color:#000;font-weight:700;letter-spacing:-0.255px;">Đơn giá</span>
<span id="t56" class="t" style="left:1136.03px;top:328.00px;font-size:13.49px;line-height:20px;color:#000;font-weight:700;">Thành tiền</span>
<svg style="left:12px;top:359px" width="20" height="9" viewBox="0 0 20 9"><g shape-rendering="crispEdges" fill="#000"><rect x="3" y="0" width="1" height="1"/><rect x="1" y="1" width="1" height="1"/><rect x="3" y="1" width="1" height="1"/><rect x="5" y="1" width="1" height="1"/><rect x="2" y="2" width="1" height="1"/><rect x="3" y="2" width="1" height="1"/><rect x="4" y="2" width="1" height="1"/><rect x="0" y="3" width="1" height="1"/><rect x="1" y="3" width="1" height="1"/><rect x="2" y="3" width="1" height="1"/><rect x="3" y="3" width="1" height="1"/><rect x="4" y="3" width="1" height="1"/><rect x="5" y="3" width="1" height="1"/><rect x="6" y="3" width="1" height="1"/><rect x="2" y="4" width="1" height="1"/><rect x="3" y="4" width="1" height="1"/><rect x="4" y="4" width="1" height="1"/><rect x="1" y="5" width="1" height="1"/><rect x="3" y="5" width="1" height="1"/><rect x="5" y="5" width="1" height="1"/><rect x="3" y="6" width="1" height="1"/><rect x="10" y="4" width="5" height="1"/><rect x="17" y="0" width="2" height="2"/><rect x="17" y="2" width="1" height="1"/><rect x="18" y="6" width="1" height="1"/><rect x="17" y="7" width="2" height="2"/></g></svg>
<span id="t57" class="t" style="left:7.51px;top:925.00px;font-size:14.12px;line-height:20px;color:#000;">Tổng cộng</span>
<div class="a" style="left:95px;top:922px;width:107px;height:25px;border:1px solid #a9a9a9;background:linear-gradient(#f5f5f5,#f5f5f5);"></div>
<div class="a" style="left:206px;top:922px;width:862px;height:25px;border:1px solid #a9a9a9;background:linear-gradient(#f5f5f5,#f5f5f5);"></div>
<div class="a" style="left:1187px;top:922px;width:105px;height:25px;border:1px solid #a9a9a9;background:linear-gradient(#f5f5f5,#f5f5f5);"></div>
<span id="t58" class="t" style="left:189.34px;top:924.00px;font-size:16.00px;line-height:20px;color:#ff0000;font-weight:700;font-family:'Liberation Serif', serif;letter-spacing:0.800px;">0</span>
<span id="t59" class="t" style="left:210.50px;top:925.00px;font-size:14.20px;line-height:20px;color:#000;">không</span>
<span id="t60" class="t" style="left:1076.01px;top:925.00px;font-size:13.89px;line-height:20px;color:#000;">Trọng lượng (Kg)</span>
<span id="t61" class="t" style="left:1275.54px;top:924.00px;font-size:16.00px;line-height:20px;color:#0000ff;font-weight:700;font-family:'Liberation Serif', serif;letter-spacing:1.000px;">0.</span>
<div class="a" style="left:2px;top:952px;width:815px;height:1px;background:#c0c0c0"></div>
<div class="a" style="left:2px;top:953px;width:815px;height:50px;background:repeating-linear-gradient(135deg,rgba(0,0,0,0) 0,rgba(0,0,0,0) 3.54px,#e9e9e9 3.54px,#e9e9e9 4.243px);"></div>
<div class="a" style="left:2px;top:1003px;width:815px;height:1px;background:#a9a9a9"></div>
<div class="a" style="left:2px;top:1005px;width:815px;height:1px;background:#a9a9a9"></div>
<svg style="left:14px;top:962px" width="29" height="30" viewBox="0 0 29 30"><defs><linearGradient id="g15" x1="0" y1="0" x2="0" y2="1"><stop offset="0" stop-color="#5f6b84"/><stop offset="1" stop-color="#39425a"/></linearGradient><linearGradient id="g16" x1="0" y1="0" x2="0" y2="1"><stop offset="0" stop-color="#b9e36a"/><stop offset="1" stop-color="#6aa81e"/></linearGradient></defs><rect x="0.5" y="5.5" width="23.5" height="23" rx="1.5" fill="url(#g15)" stroke="#2f384c"/><rect x="5" y="6" width="13.5" height="9" fill="#dbe6f2"/><rect x="5" y="6" width="3" height="9" fill="#2f384c" opacity=".55"/><rect x="4.5" y="19" width="15.5" height="9" fill="#f2f5fa"/><rect x="4.5" y="25.6" width="15.5" height="2.6" fill="#5a9ad8"/><path d="M13 5.5H18.5V0.6L28.5 8.4 18.5 16.4V11.6H13Z" fill="url(#g16)" stroke="#5a9418" stroke-width=".8"/></svg>
<span id="t62" class="t" style="left:47.49px;top:968.00px;font-size:14.53px;line-height:20px;color:#0000ff;font-weight:700;letter-spacing:0.019px;">LƯU (F2)</span>
<div class="a" style="left:118px;top:958px;width:1px;height:40px;background:repeating-linear-gradient(180deg,#c8c8c8 0,#c8c8c8 3px,rgba(0,0,0,0) 3px,rgba(0,0,0,0) 6px)"></div>
<svg style="left:129px;top:962px" width="31" height="31" viewBox="0 0 31 31"><defs><linearGradient id="g17" x1="0" y1="0" x2="0" y2="1"><stop offset="0" stop-color="#e3e9f4"/><stop offset="1" stop-color="#9fb0cf"/></linearGradient><radialGradient id="g18" cx="0.4" cy="0.3" r="0.75"><stop offset="0" stop-color="#b6e36a"/><stop offset="0.65" stop-color="#6cb82a"/><stop offset="1" stop-color="#4c9a1c"/></radialGradient></defs><rect x="7" y="3" width="12.5" height="12" fill="#eef1f8" stroke="#98a4c0" stroke-width=".9"/><rect x="0.5" y="11.5" width="26" height="14" rx="3" fill="url(#g17)" stroke="#8e9ec0"/><path d="M5 11.5H22V15.5A3 3 0 0 1 19 18.5H8A3 3 0 0 1 5 15.5Z" fill="#566080"/><rect x="6" y="22" width="15" height="7.5" fill="#f4f6fb" stroke="#8e9ec0" stroke-width=".8"/><rect x="7.5" y="24" width="12" height="4" fill="#5a9ad8"/><circle cx="22.8" cy="8.6" r="7.3" fill="url(#g18)" stroke="#4f9a20" stroke-width=".6"/><text x="22.8" y="13" text-anchor="middle" font-family="Liberation Sans,sans-serif" font-size="12" font-weight="700" fill="#2a5e0e">?</text></svg>
<span id="t63" class="t" style="left:164.49px;top:968.00px;font-size:14.53px;line-height:20px;color:#0000ff;font-weight:700;letter-spacing:0.491px;">IN NÓNG (F4)</span>
<svg style="left:275px;top:962px" width="31" height="31" viewBox="0 0 31 31"><defs><linearGradient id="g19" x1="0" y1="0" x2="0" y2="1"><stop offset="0" stop-color="#e3e9f4"/><stop offset="1" stop-color="#9fb0cf"/></linearGradient><radialGradient id="g20" cx="0.4" cy="0.3" r="0.75"><stop offset="0" stop-color="#b6e36a"/><stop offset="0.65" stop-color="#6cb82a"/><stop offset="1" stop-color="#4c9a1c"/></radialGradient></defs><rect x="7" y="3" width="12.5" height="12" fill="#eef1f8" stroke="#98a4c0" stroke-width=".9"/><rect x="0.5" y="11.5" width="26" height="14" rx="3" fill="url(#g19)" stroke="#8e9ec0"/><path d="M5 11.5H22V15.5A3 3 0 0 1 19 18.5H8A3 3 0 0 1 5 15.5Z" fill="#566080"/><rect x="6" y="22" width="15" height="7.5" fill="#f4f6fb" stroke="#8e9ec0" stroke-width=".8"/><rect x="7.5" y="24" width="12" height="4" fill="#5a9ad8"/><circle cx="22.8" cy="8.6" r="7.3" fill="url(#g20)" stroke="#4f9a20" stroke-width=".6"/><text x="22.8" y="13" text-anchor="middle" font-family="Liberation Sans,sans-serif" font-size="12" font-weight="700" fill="#2a5e0e">?</text></svg>
<span id="t64" class="t" style="left:310.49px;top:968.00px;font-size:14.53px;line-height:20px;color:#0000ff;font-weight:700;letter-spacing:0.773px;">IN A5 (F5)</span>
<div class="a" style="left:393px;top:958px;width:1px;height:40px;background:repeating-linear-gradient(180deg,#c8c8c8 0,#c8c8c8 3px,rgba(0,0,0,0) 3px,rgba(0,0,0,0) 6px)"></div>
<svg style="left:404px;top:962px" width="31" height="31" viewBox="0 0 31 31"><defs><linearGradient id="g21" x1="0" y1="0" x2="0" y2="1"><stop offset="0" stop-color="#e3e9f4"/><stop offset="1" stop-color="#9fb0cf"/></linearGradient><radialGradient id="g22" cx="0.4" cy="0.3" r="0.75"><stop offset="0" stop-color="#b6e36a"/><stop offset="0.65" stop-color="#6cb82a"/><stop offset="1" stop-color="#4c9a1c"/></radialGradient></defs><rect x="7" y="3" width="12.5" height="12" fill="#eef1f8" stroke="#98a4c0" stroke-width=".9"/><rect x="0.5" y="11.5" width="26" height="14" rx="3" fill="url(#g21)" stroke="#8e9ec0"/><path d="M5 11.5H22V15.5A3 3 0 0 1 19 18.5H8A3 3 0 0 1 5 15.5Z" fill="#566080"/><rect x="6" y="22" width="15" height="7.5" fill="#f4f6fb" stroke="#8e9ec0" stroke-width=".8"/><rect x="7.5" y="24" width="12" height="4" fill="#5a9ad8"/><circle cx="22.8" cy="8.6" r="7.3" fill="url(#g22)" stroke="#4f9a20" stroke-width=".6"/><text x="22.8" y="13" text-anchor="middle" font-family="Liberation Sans,sans-serif" font-size="12" font-weight="700" fill="#2a5e0e">?</text></svg>
<span id="t65" class="t" style="left:438.99px;top:968.00px;font-size:14.53px;line-height:20px;color:#0000ff;font-weight:700;letter-spacing:0.828px;">IN A4 (F6)</span>
<div class="a" style="left:522px;top:958px;width:1px;height:40px;background:repeating-linear-gradient(180deg,#c8c8c8 0,#c8c8c8 3px,rgba(0,0,0,0) 3px,rgba(0,0,0,0) 6px)"></div>
<svg style="left:537px;top:971px" width="13" height="13" viewBox="0 0 13 13"><rect x="0.5" y="0.5" width="12" height="12" fill="#fff" stroke="#9a9a9a"/></svg>
<span id="t66" class="t" style="left:551.51px;top:968.00px;font-size:14.05px;line-height:20px;color:#0000ff;font-weight:700;">QUY CÁCH</span>
<svg style="left:643px;top:971px" width="13" height="13" viewBox="0 0 13 13"><rect x="0.5" y="0.5" width="12" height="12" fill="#fff" stroke="#9a9a9a"/><path d="M2.2 7L5 11 12.2 0.4" fill="none" stroke="#000" stroke-width="1.7"/></svg>
<span id="t67" class="t" style="left:657.49px;top:968.00px;font-size:14.53px;line-height:20px;color:#000;font-weight:700;letter-spacing:0.534px;">XEM IN</span>
<svg style="left:725px;top:966px" width="25" height="25" viewBox="0 0 25 25"><defs><linearGradient id="g23" x1="0" y1="0" x2="0" y2="1"><stop offset="0" stop-color="#f29a8e"/><stop offset="0.45" stop-color="#dc3a2e"/><stop offset="1" stop-color="#b92019"/></linearGradient></defs><path d="M4.6 1.2L12.5 8 20.4 1.2Q21.4 .5 22.3 1.4L23.8 3Q24.6 4 23.7 4.9L16.6 12 23.7 19.3Q24.6 20.2 23.8 21.2L22.3 22.9Q21.4 23.8 20.4 23L12.5 16.2 4.6 23Q3.6 23.8 2.7 22.9L1.2 21.2Q.4 20.2 1.3 19.3L8.4 12 1.3 4.9Q.4 4 1.2 3L2.7 1.4Q3.6 .5 4.6 1.2Z" fill="url(#g23)" stroke="#a82018" stroke-width=".8" stroke-linejoin="round"/></svg>
<span id="t68" class="t" style="left:757.99px;top:968.00px;font-size:14.44px;line-height:20px;color:#ff0000;font-weight:700;">THOÁT</span>
<div class="a" style="left:0px;top:1013px;width:1920px;height:1px;background:repeating-linear-gradient(90deg,#a8a8a8 0,#a8a8a8 3px,rgba(0,0,0,0) 3px,rgba(0,0,0,0) 6px);background-position:0px 0"></div>
<span id="t69" class="t" style="left:8.09px;top:1018.00px;font-size:11.74px;line-height:20px;color:#000;font-weight:700;">Chào mừng: Administrator đến với phần mềm MekongSoft</span>
<div class="a" style="left:348px;top:1022px;width:2px;height:11px;background:#d6d6d6"></div>
<span id="t70" class="t" style="left:363.09px;top:1017.00px;font-size:11.64px;line-height:20px;color:#000;font-weight:700;">Version: 4.0.0</span>
<div class="a" style="left:451px;top:1022px;width:2px;height:11px;background:#d6d6d6"></div>
<span id="t71" class="t" style="left:465.58px;top:1017.00px;font-size:11.99px;line-height:20px;color:#ff0000;font-weight:700;letter-spacing:0.101px;">Ngày: 03/10/2023 3:00:55 CH</span>
<div class="a" style="left:1613px;top:1016px;width:1px;height:24px;background:repeating-linear-gradient(180deg,#b0b0b0 0,#b0b0b0 3px,rgba(0,0,0,0) 3px,rgba(0,0,0,0) 6px)"></div>
<span id="t72" class="t" style="left:1624.08px;top:1018.00px;font-size:11.86px;line-height:20px;color:#000;font-weight:700;">@2023 MekongSoft. Thông tin hỗ trợ: 0901 000 508</span>
<div class="a" style="left:1300px;top:215px;width:612px;height:734px;background:linear-gradient(#fff,#fff);border:3px solid #a9a9a9;"></div>
<span id="t73" class="t" style="left:1308.11px;top:220.00px;font-size:11.11px;line-height:20px;color:#9a9a9a;font-weight:700;letter-spacing:-0.190px;">DANH SÁCH PHIẾU</span>
<svg style="left:1871px;top:226px" width="7" height="8" viewBox="0 0 7 8"><g shape-rendering="crispEdges"><rect x="1" y="0" width="5" height="5" fill="#000"/><rect x="2" y="1" width="1" height="4" fill="#fff"/><rect x="0" y="5" width="7" height="1" fill="#000"/><rect x="3" y="6" width="1" height="2" fill="#000"/></g></svg>
<svg style="left:1893px;top:226px" width="9.5" height="7" viewBox="0 0 9.5 7"><path d="M0 0H3.18L4.75 2.17 6.32 0H9.5L6.41 3.5 9.5 7H6.32L4.75 4.83 3.18 7H0L3.09 3.5Z" fill="#000"/></svg>
<div class="a" style="left:1304px;top:241px;width:603px;height:1px;background:repeating-linear-gradient(90deg,#c4c4c4 0,#c4c4c4 3px,rgba(0,0,0,0) 3px,rgba(0,0,0,0) 6px);background-position:0px 0"></div>
<span id="t74" class="t" style="left:1307.51px;top:247.00px;font-size:13.87px;line-height:20px;color:#000;">Từ ngày</span>
<span id="t75" class="t" style="left:1617.51px;top:247.00px;font-size:13.95px;line-height:20px;color:#000;">Đến ngày</span>
<div class="a" style="left:1307px;top:271px;width:306px;height:24px;border:1px solid #a9a9a9;background:linear-gradient(#fff,#fff);"></div>
<div class="a" style="left:1617px;top:271px;width:288px;height:24px;border:1px solid #a9a9a9;background:linear-gradient(#fff,#fff);"></div>
<span id="t76" class="t" style="left:1310.99px;top:273.00px;font-size:14.53px;line-height:20px;color:#000;letter-spacing:0.167px;">01/10/2020</span>
<span id="t77" class="t" style="left:1620.99px;top:273.00px;font-size:14.53px;line-height:20px;color:#000;letter-spacing:0.167px;">03/10/2023</span>
<svg style="left:1601px;top:281px" width="7" height="4" viewBox="0 0 7 4"><path d="M0 0H7L3.5 4Z" fill="#000"/></svg>
<svg style="left:1893px;top:281px" width="7" height="4" viewBox="0 0 7 4"><path d="M0 0H7L3.5 4Z" fill="#000"/></svg>
<span id="t78" class="t" style="left:1307.53px;top:304.00px;font-size:13.46px;line-height:20px;color:#000;letter-spacing:-0.322px;">Người lập</span>
<div class="a" style="left:1375px;top:300px;width:530px;height:24px;border:1px solid #a9a9a9;background:linear-gradient(#fff,#fff);"></div>
<span id="t79" class="t" style="left:1379.01px;top:302.00px;font-size:13.87px;line-height:20px;color:#000;">Administrator</span>
<svg style="left:1873px;top:310px" width="7" height="4" viewBox="0 0 7 4"><path d="M0 0H7L3.5 4Z" fill="#000"/></svg>
<svg style="left:1885.5px;top:305px" width="17" height="14" viewBox="0 0 17 14"><path d="M11.4 1.1C6 0.1 2.2 3 2.3 7.4L0.2 7.4 4 10.9 7.8 7.5 5.8 7.5C5.9 4.6 8 2.5 11.4 1.7Z" fill="#4cb648"/><path d="M5.4 12.4C10.6 13.4 14.4 10.6 14.5 6.4L16.6 6.4 13 3.1 9.2 6.5 11.2 6.5C11 9.2 9 11.2 5.4 11.9Z" fill="#3fae3c"/></svg>
<div class="a" style="left:1814px;top:329px;width:91px;height:24px;border:1px solid #a9a9a9;background:repeating-linear-gradient(135deg,rgba(0,0,0,0) 0,rgba(0,0,0,0) 3.54px,#e0e0e0 3.54px,#e0e0e0 4.243px),linear-gradient(#fff,#fff);"></div>
<svg style="left:1819px;top:334px" width="14" height="14" viewBox="0 0 14 14"><circle cx="5.4" cy="5.4" r="4.1" fill="#fff" stroke="#333" stroke-width="2"/><path d="M8.6 8.6L13 13" stroke="#333" stroke-width="2.6" stroke-linecap="round"/></svg>
<span id="t80" class="t" style="left:1838.00px;top:332.00px;font-size:14.24px;line-height:20px;color:#0000ff;font-weight:700;">Tìm kiếm</span>
<div class="a" style="left:1307px;top:357px;width:598px;height:585px;border:1px solid #a9a9a9;background:linear-gradient(#fff,#fff);"></div>
<div class="a" style="left:1308px;top:358px;width:596px;height:22px;background:repeating-linear-gradient(135deg,rgba(0,0,0,0) 0,rgba(0,0,0,0) 3.54px,#eeeeee 3.54px,#eeeeee 4.243px);"></div>
<div class="a" style="left:1308px;top:380px;width:596px;height:1px;background:#a9a9a9"></div>
<div class="a" style="left:1308px;top:381px;width:21px;height:169px;background:repeating-linear-gradient(135deg,rgba(0,0,0,0) 0,rgba(0,0,0,0) 3.54px,#eeeeee 3.54px,#eeeeee 4.243px);"></div>
<div class="a" style="left:1330px;top:410px;width:569px;height:27px;background:linear-gradient(#f4f4f4,#f4f4f4);"></div>
<div class="a" style="left:1421px;top:410px;width:102px;height:27px;background:linear-gradient(90deg,#ffff00,#ffffa8);"></div>
<div class="a" style="left:1329px;top:358px;width:1px;height:23px;background:#a9a9a9"></div>
<div class="a" style="left:1329px;top:381px;width:1px;height:169px;background:#a9a9a9"></div>
<div class="a" style="left:1420px;top:358px;width:1px;height:23px;background:#a9a9a9"></div>
<div class="a" style="left:1420px;top:381px;width:1px;height:169px;background:#cfcfcf"></div>
<div class="a" style="left:1523px;top:358px;width:1px;height:23px;background:#a9a9a9"></div>
<div class="a" style="left:1523px;top:381px;width:1px;height:169px;background:#cfcfcf"></div>
<div class="a" style="left:1598px;top:358px;width:1px;height:23px;background:#a9a9a9"></div>
<div class="a" style="left:1598px;top:381px;width:1px;height:169px;background:#cfcfcf"></div>
<div class="a" style="left:1673px;top:358px;width:1px;height:23px;background:#a9a9a9"></div>
<div class="a" style="left:1673px;top:381px;width:1px;height:169px;background:#cfcfcf"></div>
<div class="a" style="left:1748px;top:358px;width:1px;height:23px;background:#a9a9a9"></div>
<div class="a" style="left:1748px;top:381px;width:1px;height:169px;background:#cfcfcf"></div>
<div class="a" style="left:1823px;top:358px;width:1px;height:23px;background:#a9a9a9"></div>
<div class="a" style="left:1823px;top:381px;width:1px;height:169px;background:#cfcfcf"></div>
<div class="a" style="left:1899px;top:358px;width:1px;height:23px;background:#a9a9a9"></div>
<div class="a" style="left:1899px;top:381px;width:1px;height:169px;background:#cfcfcf"></div>
<div class="a" style="left:1308px;top:408px;width:592px;height:2px;background:#a0a0a0"></div>
<div class="a" style="left:1308px;top:437px;width:592px;height:1px;background:#cfcfcf"></div>
<div class="a" style="left:1308px;top:437px;width:22px;height:1px;background:#a9a9a9"></div>
<div class="a" style="left:1308px;top:465px;width:592px;height:1px;background:#cfcfcf"></div>
<div class="a" style="left:1308px;top:465px;width:22px;height:1px;background:#a9a9a9"></div>
<div class="a" style="left:1308px;top:493px;width:592px;height:1px;background:#cfcfcf"></div>
<div class="a" style="left:1308px;top:493px;width:22px;height:1px;background:#a9a9a9"></div>
<div class="a" style="left:1308px;top:521px;width:592px;height:1px;background:#cfcfcf"></div>
<div class="a" style="left:1308px;top:521px;width:22px;height:1px;background:#a9a9a9"></div>
<div class="a" style="left:1308px;top:549px;width:592px;height:1px;background:#cfcfcf"></div>
<div class="a" style="left:1308px;top:549px;width:22px;height:1px;background:#a9a9a9"></div>
<span id="t81" class="t" style="left:1334.03px;top:359.00px;font-size:13.46px;line-height:20px;color:#000;font-weight:700;letter-spacing:-0.064px;">Ngày lập</span>
<span id="t82" class="t" style="left:1425.03px;top:359.00px;font-size:13.54px;line-height:20px;color:#000;font-weight:700;">Mã phiếu</span>
<span id="t83" class="t" style="left:1528.03px;top:359.00px;font-size:13.46px;line-height:20px;color:#000;font-weight:700;letter-spacing:-0.049px;">Tổng tiền</span>
<span id="t84" class="t" style="left:1603.03px;top:359.00px;font-size:13.46px;line-height:20px;color:#000;font-weight:700;letter-spacing:-0.658px;">Ghi chú</span>
<span id="t85" class="t" style="left:1678.03px;top:359.00px;font-size:13.46px;line-height:20px;color:#000;font-weight:700;letter-spacing:-0.566px;">Người lập</span>
<span id="t86" class="t" style="left:1753.03px;top:359.00px;font-size:13.48px;line-height:20px;color:#000;font-weight:700;">Kho xuất</span>
<span id="t87" class="t" style="left:1828.03px;top:359.00px;font-size:13.46px;line-height:20px;color:#000;font-weight:700;letter-spacing:-0.199px;">Kho nhận</span>
<svg style="left:1312.6px;top:390.8px" width="6" height="8" viewBox="0 0 6 8"><ellipse cx="3" cy="1.7" rx="2.7" ry="1.65" fill="#000"/><path d="M0.5 2.4H5.5L3.55 5V7.2H2.45V5Z" fill="#000"/><ellipse cx="3" cy="1.35" rx="1.35" ry=".55" fill="#fff"/></svg>
<svg style="left:1338px;top:393px" width="9" height="3" viewBox="0 0 9 3"><rect x="0" y="0" width="9" height="1" fill="#666"/><rect x="0" y="2" width="9" height="1" fill="#666"/></svg>
<svg style="left:1532px;top:393px" width="9" height="3" viewBox="0 0 9 3"><rect x="0" y="0" width="9" height="1" fill="#666"/><rect x="0" y="2" width="9" height="1" fill="#666"/></svg>
<svg style="left:1425.5px;top:389px" width="16" height="11" viewBox="0 0 16 11"><rect x="4.5" y="0" width="7" height="11" rx=".8" fill="#0c9a1c"/><text x="0.4" y="8" textLength="3.4" font-family="Liberation Sans,sans-serif" font-size="7" font-weight="700" lengthAdjust="spacingAndGlyphs" fill="#585858">A</text><text x="6.3" y="8" textLength="3.4" font-family="Liberation Sans,sans-serif" font-size="7" font-weight="700" lengthAdjust="spacingAndGlyphs" fill="#fff">B</text><text x="12.5" y="8" textLength="3.3" font-family="Liberation Sans,sans-serif" font-size="7" font-weight="700" lengthAdjust="spacingAndGlyphs" fill="#585858">C</text></svg>
<svg style="left:1603.5px;top:389px" width="16" height="11" viewBox="0 0 16 11"><rect x="4.5" y="0" width="7" height="11" rx=".8" fill="#0c9a1c"/><text x="0.4" y="8" textLength="3.4" font-family="Liberation Sans,sans-serif" font-size="7" font-weight="700" lengthAdjust="spacingAndGlyphs" fill="#585858">A</text><text x="6.3" y="8" textLength="3.4" font-family="Liberation Sans,sans-serif" font-size="7" font-weight="700" lengthAdjust="spacingAndGlyphs" fill="#fff">B</text><text x="12.5" y="8" textLength="3.3" font-family="Liberation Sans,sans-serif" font-size="7" font-weight="700" lengthAdjust="spacingAndGlyphs" fill="#585858">C</text></svg>
<svg style="left:1678.5px;top:389px" width="16" height="11" viewBox="0 0 16 11"><rect x="4.5" y="0" width="7" height="11" rx=".8" fill="#0c9a1c"/><text x="0.4" y="8" textLength="3.4" font-family="Liberation Sans,sans-serif" font-size="7" font-weight="700" lengthAdjust="spacingAndGlyphs" fill="#585858">A</text><text x="6.3" y="8" textLength="3.4" font-family="Liberation Sans,sans-serif" font-size="7" font-weight="700" lengthAdjust="spacingAndGlyphs" fill="#fff">B</text><text x="12.5" y="8" textLength="3.3" font-family="Liberation Sans,sans-serif" font-size="7" font-weight="700" lengthAdjust="spacingAndGlyphs" fill="#585858">C</text></svg>
<svg style="left:1753.5px;top:389px" width="16" height="11" viewBox="0 0 16 11"><rect x="4.5" y="0" width="7" height="11" rx=".8" fill="#0c9a1c"/><text x="0.4" y="8" textLength="3.4" font-family="Liberation Sans,sans-serif" font-size="7" font-weight="700" lengthAdjust="spacingAndGlyphs" fill="#585858">A</text><text x="6.3" y="8" textLength="3.4" font-family="Liberation Sans,sans-serif" font-size="7" font-weight="700" lengthAdjust="spacingAndGlyphs" fill="#fff">B</text><text x="12.5" y="8" textLength="3.3" font-family="Liberation Sans,sans-serif" font-size="7" font-weight="700" lengthAdjust="spacingAndGlyphs" fill="#585858">C</text></svg>
<svg style="left:1828.5px;top:389px" width="16" height="11" viewBox="0 0 16 11"><rect x="4.5" y="0" width="7" height="11" rx=".8" fill="#0c9a1c"/><text x="0.4" y="8" textLength="3.4" font-family="Liberation Sans,sans-serif" font-size="7" font-weight="700" lengthAdjust="spacingAndGlyphs" fill="#585858">A</text><text x="6.3" y="8" textLength="3.4" font-family="Liberation Sans,sans-serif" font-size="7" font-weight="700" lengthAdjust="spacingAndGlyphs" fill="#fff">B</text><text x="12.5" y="8" textLength="3.3" font-family="Liberation Sans,sans-serif" font-size="7" font-weight="700" lengthAdjust="spacingAndGlyphs" fill="#585858">C</text></svg>
<svg style="left:1314px;top:419px" width="5" height="9" viewBox="0 0 5 9"><path d="M0 0L4.6 4.2 0 8.4Z" fill="#000"/></svg>
<span id="t88" class="t" style="left:1334.49px;top:413.00px;font-size:14.53px;line-height:20px;color:#000;letter-spacing:0.111px;">03/10/2023</span>
<span id="t89" class="t" style="left:1424.99px;top:413.00px;font-size:14.53px;line-height:20px;color:#ff0000;font-weight:700;letter-spacing:0.474px;">XCK00005-...</span>
<span id="t90" class="t" style="left:1531.50px;top:413.00px;font-size:14.32px;line-height:20px;color:#000;">4,984,000</span>
<span id="t91" class="t" style="left:1678.02px;top:414.00px;font-size:13.64px;line-height:20px;color:#000;">Administ...</span>
<span id="t92" class="t" style="left:1753.02px;top:414.00px;font-size:13.70px;line-height:20px;color:#000;">Kho chính</span>
<span id="t93" class="t" style="left:1828.01px;top:413.00px;font-size:13.92px;line-height:20px;color:#000;">Kho hư</span>
<span id="t94" class="t" style="left:1334.49px;top:441.00px;font-size:14.53px;line-height:20px;color:#000;letter-spacing:0.111px;">03/10/2023</span>
<span id="t95" class="t" style="left:1425.02px;top:442.00px;font-size:13.75px;line-height:20px;color:#000;">XCK00004-0...</span>
<span id="t96" class="t" style="left:1531.50px;top:441.00px;font-size:14.32px;line-height:20px;color:#000;">1,805,000</span>
<span id="t97" class="t" style="left:1678.02px;top:442.00px;font-size:13.64px;line-height:20px;color:#000;">Administ...</span>
<span id="t98" class="t" style="left:1753.02px;top:442.00px;font-size:13.70px;line-height:20px;color:#000;">Kho chính</span>
<span id="t99" class="t" style="left:1828.01px;top:441.00px;font-size:13.92px;line-height:20px;color:#000;">Kho hư</span>
<span id="t100" class="t" style="left:1334.49px;top:469.00px;font-size:14.53px;line-height:20px;color:#000;letter-spacing:0.111px;">03/10/2023</span>
<span id="t101" class="t" style="left:1425.02px;top:470.00px;font-size:13.75px;line-height:20px;color:#000;">XCK00003-0...</span>
<span id="t102" class="t" style="left:1544.00px;top:469.00px;font-size:14.17px;line-height:20px;color:#000;">126,000</span>
<span id="t103" class="t" style="left:1678.02px;top:470.00px;font-size:13.64px;line-height:20px;color:#000;">Administ...</span>
<span id="t104" class="t" style="left:1753.02px;top:470.00px;font-size:13.70px;line-height:20px;color:#000;">Kho chính</span>
<span id="t105" class="t" style="left:1828.01px;top:469.00px;font-size:13.92px;line-height:20px;color:#000;">Kho hư</span>
<span id="t106" class="t" style="left:1334.49px;top:497.00px;font-size:14.53px;line-height:20px;color:#000;letter-spacing:0.111px;">03/10/2023</span>
<span id="t107" class="t" style="left:1425.02px;top:498.00px;font-size:13.75px;line-height:20px;color:#000;">XCK00002-0...</span>
<span id="t108" class="t" style="left:1531.50px;top:497.00px;font-size:14.32px;line-height:20px;color:#000;">1,400,000</span>
<span id="t109" class="t" style="left:1678.02px;top:498.00px;font-size:13.64px;line-height:20px;color:#000;">Administ...</span>
<span id="t110" class="t" style="left:1753.02px;top:498.00px;font-size:13.70px;line-height:20px;color:#000;">Kho chính</span>
<span id="t111" class="t" style="left:1828.01px;top:497.00px;font-size:13.92px;line-height:20px;color:#000;">Kho hư</span>
<span id="t112" class="t" style="left:1334.49px;top:525.00px;font-size:14.53px;line-height:20px;color:#000;letter-spacing:0.111px;">10/07/2023</span>
<span id="t113" class="t" style="left:1425.02px;top:526.00px;font-size:13.75px;line-height:20px;color:#000;">XCK00001-1...</span>
<span id="t114" class="t" style="left:1535.50px;top:525.00px;font-size:14.32px;line-height:20px;color:#000;">10,000,...</span>
<span id="t115" class="t" style="left:1678.02px;top:526.00px;font-size:13.64px;line-height:20px;color:#000;">Administ...</span>
<span id="t116" class="t" style="left:1753.02px;top:526.00px;font-size:13.70px;line-height:20px;color:#000;">Kho chính</span>
<span id="t117" class="t" style="left:1828.01px;top:525.00px;font-size:13.92px;line-height:20px;color:#000;">Kho hư</span>
<div class="a" style="left:1308px;top:907px;width:596px;height:1px;background:#a9a9a9"></div>
<div class="a" style="left:1308px;top:908px;width:596px;height:33px;background:repeating-linear-gradient(135deg,rgba(0,0,0,0) 0,rgba(0,0,0,0) 3.54px,#eeeeee 3.54px,#eeeeee 4.243px);"></div>
<div class="a" style="left:840px;top:457px;width:241px;height:125px;background:linear-gradient(#fff,#fff);border:4px solid #707070;"></div>
<div class="a" style="left:844px;top:461px;width:233px;height:25px;background:repeating-linear-gradient(135deg,rgba(0,0,0,0) 0,rgba(0,0,0,0) 3.54px,#ebebeb 3.54px,#ebebeb 4.243px);"></div>
<div class="a" style="left:844px;top:486px;width:233px;height:1px;background:repeating-linear-gradient(90deg,#808080 0,#808080 4px,rgba(0,0,0,0) 4px,rgba(0,0,0,0) 7px);background-position:0px 0"></div>
<span id="t118" class="t" style="left:849.09px;top:464.00px;font-size:11.60px;line-height:20px;color:#000;font-weight:700;">Xác nhận</span>
<svg style="left:1059.5px;top:470px" width="9.5" height="7" viewBox="0 0 9.5 7"><path d="M0 0H3.18L4.75 2.17 6.32 0H9.5L6.41 3.5 9.5 7H6.32L4.75 4.83 3.18 7H0L3.09 3.5Z" fill="#a6a6a6"/></svg>
<svg style="left:857px;top:500px" width="30" height="30" viewBox="0 0 30 30"><circle cx="15" cy="15" r="15" fill="#0a64b4"/><text x="15" y="23.8" text-anchor="middle" font-family="Liberation Sans,sans-serif" font-size="25" fill="#fff">?</text></svg>
<span id="t119" class="t" style="left:899.61px;top:505.00px;font-size:11.11px;line-height:20px;color:#000;letter-spacing:-0.258px;">Bạn có chắc muốn xóa phiếu này ?</span>
<div class="a" style="left:879px;top:543px;width:75px;height:23px;border:1px solid #a9a9a9;background:repeating-linear-gradient(135deg,rgba(0,0,0,0) 0,rgba(0,0,0,0) 3.54px,#d8d8d8 3.54px,#d8d8d8 4.243px),linear-gradient(#eeeeee,#eeeeee);"></div>
<div class="a" style="left:882px;top:546px;width:69px;height:17px;border:1px dotted #000;"></div>
<div class="a" style="left:966px;top:543px;width:75px;height:23px;border:1px solid #a9a9a9;background:repeating-linear-gradient(135deg,rgba(0,0,0,0) 0,rgba(0,0,0,0) 3.54px,#e6e6e6 3.54px,#e6e6e6 4.243px),linear-gradient(#fff,#fff);"></div>
<span id="t120" class="t" style="left:907.61px;top:545.00px;font-size:11.11px;line-height:20px;color:#000;letter-spacing:-0.289px;">Yes</span>
<span id="t121" class="t" style="left:996.11px;top:545.00px;font-size:11.11px;line-height:20px;color:#000;letter-spacing:-0.148px;">No</span>
<svg style="left:886px;top:689px" width="13" height="20" viewBox="0 0 13 20"><path d="M0.5 0.5V16.3L4.2 12.9 7 19.3 9.4 18.2 6.6 12H11.6Z" fill="#fff" stroke="#000" stroke-width="1" stroke-linejoin="miter"/></svg>
</body></html>
